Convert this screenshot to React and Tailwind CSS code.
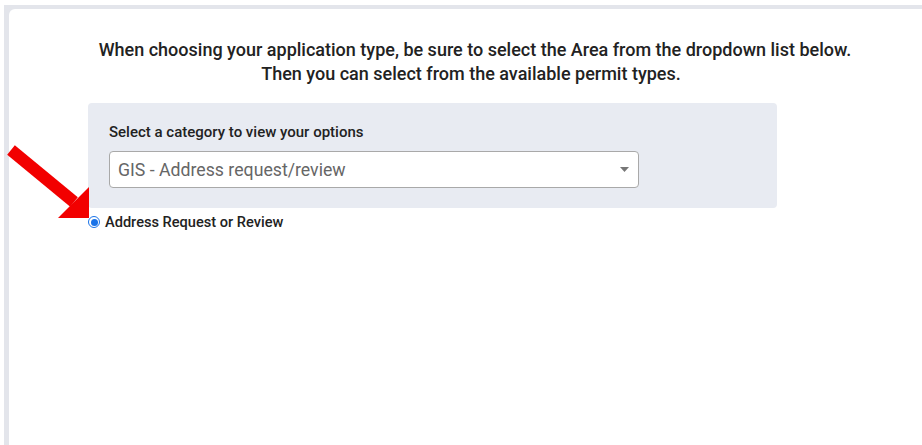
import React from "react";

function Arrow() {
  return (
    <svg
      className="absolute left-0 top-0 pointer-events-none"
      width="100"
      height="230"
      viewBox="0 0 100 230"
    >
      <line x1="11" y1="150" x2="74" y2="202" stroke="#f20000" strokeWidth="12" />
      <polygon points="89,218 58,218 89,187" fill="#f20000" />
    </svg>
  );
}

export default function App() {
  return (
    <div
      className="relative h-[445px] w-[922px] overflow-hidden bg-white pl-[4px] pt-[5px]"
      style={{ fontFamily: "Roboto, 'Liberation Sans', sans-serif" }}
    >
      <div className="h-full bg-[#e3e5eb] pl-[5px] pt-[4px]">
        <div className="h-full rounded-tl-[6px] bg-white pt-[29px]">
          <div className="ml-[79px] w-[774px]">
            <p className="text-center text-[18px] font-medium leading-[24px] text-[#222]">
              When choosing your application type, be sure to select the Area from the dropdown list below.
              <br />
              <span className="inline-block pr-[8px]">Then you can select from the available permit types.</span>
            </p>
            <div className="mt-[17px] w-[689px] rounded-[4px] bg-[#e8ebf2] px-[21px] pb-[20px] pt-[19px]">
              <div className="text-[15px] font-medium leading-[20px] text-[#222]">
                Select a category to view your options
              </div>
              <div className="mt-[9px] flex h-[37px] w-[530px] items-center justify-between rounded-[4px] border border-[#a9a9a9] bg-white pl-[8px] pr-[9px]">
                <span className="text-[17.7px] leading-[20px] text-[#666]">GIS - Address request/review</span>
                <svg width="9" height="5" viewBox="0 0 9 5">
                  <polygon points="0,0 9,0 4.5,5" fill="#777" />
                </svg>
              </div>
            </div>
            <label className="mt-[4px] flex items-center gap-[5px]">
              <span className="flex h-[12px] w-[12px] items-center justify-center rounded-full border border-[#1a73e8] bg-white">
                <span className="h-[7px] w-[7px] rounded-full bg-[#1a73e8]" />
              </span>
              <span className="text-[14.6px] font-medium leading-[20px] text-[#222]">Address Request or Review</span>
            </label>
          </div>
        </div>
      </div>
      <Arrow />
    </div>
  );
}
